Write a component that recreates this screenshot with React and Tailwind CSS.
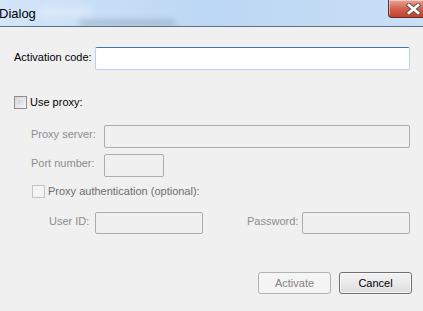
import React from "react"

const font = { fontFamily: '"Liberation Sans", Arial, sans-serif' }

function Checkbox({ disabled }) {
  return (
    <span
      className={
        disabled
          ? "box-border block h-[13px] w-[13px] shrink-0 border border-[#c4c4c4] bg-[#f4f4f4]"
          : "box-border block h-[13px] w-[13px] shrink-0 border border-[#8e8f8f] bg-gradient-to-br from-[#d6d6d6] to-[#f7f7f7] p-[2px]"
      }
    >
      {!disabled && <span className="block h-full w-full border border-[#e8e8e8] bg-gradient-to-br from-[#cbcbcb] to-[#f2f2f2]" />}
    </span>
  )
}

function Field({ w, h = "h-[23px]" }) {
  return <div className={`${w} ${h} box-border rounded-[2px] border border-[#adadad] bg-[#f0f0f0]`} />
}

export default function App() {
  return (
    <div className="h-[311px] w-[423px] overflow-hidden bg-[#f0f0f0] text-[11px] leading-[13px] text-black" style={font}>
      <div className="relative flex h-[27px] overflow-hidden border-b border-[#5d6f82] bg-gradient-to-r from-[#d3e5f8] via-[#bcd7f4] to-[#c9dff6]">
        <div className="pointer-events-none absolute left-[80px] top-[20px] h-[6px] w-[95px] bg-[#6a7f95] opacity-40 blur-[3px]" />
        <div className="pointer-events-none absolute left-[40px] top-[8px] h-[8px] w-[50px] bg-white opacity-40 blur-[4px]" />
        <span className="relative ml-[-1px] mt-[6px] text-[13px] leading-[16px] text-black">Dialog</span>
        <div className="relative ml-auto flex h-[18px] w-[35px] items-center rounded-bl-[4px] border-b border-l border-[#6d2a20] bg-gradient-to-b from-[#e9a698] via-[#d2634f] to-[#c0402c] pl-[17px] shadow-[inset_1px_1px_0_rgba(255,255,255,0.45)]">
          <svg width="15" height="12" viewBox="0 0 15 12">
            <path d="M3 2.2 L12 9.8 M12 2.2 L3 9.8" stroke="#6b4a46" strokeWidth="4.6" strokeLinecap="square" />
            <path d="M3 2.2 L12 9.8 M12 2.2 L3 9.8" stroke="#ffffff" strokeWidth="2.8" strokeLinecap="square" />
          </svg>
        </div>
      </div>

      <div className="flex flex-col pl-[14px]">
        <div className="mt-[20px] flex h-[23px] items-start">
          <span className="w-[81px] pt-[4px]">Activation code:</span>
          <div className="box-border h-[23px] w-[315px] rounded-[2px] border border-[#b7d3ec] border-t-[#3d7bad] bg-white" />
        </div>

        <div className="mt-[26px] flex h-[13px] items-center gap-[3px]">
          <Checkbox />
          <span>Use proxy:</span>
        </div>

        <div className="mt-[16px] flex h-[23px] items-start pl-[17px] text-[#8d8d8d]">
          <span className="w-[73px] pt-[3px]">Proxy server:</span>
          <Field w="w-[306px]" />
        </div>

        <div className="mt-[6px] flex h-[23px] items-start pl-[17px] text-[#8d8d8d]">
          <span className="w-[73px] pt-[3px]">Port number:</span>
          <Field w="w-[60px]" />
        </div>

        <div className="mt-[8px] flex h-[13px] items-center gap-[3px] pl-[18px] text-[#6d6d6d]">
          <Checkbox disabled />
          <span>Proxy authentication (optional):</span>
        </div>

        <div className="mt-[14px] flex h-[22px] items-start pl-[35px] text-[#8d8d8d]">
          <span className="w-[46px] pt-[3px]">User ID:</span>
          <Field w="w-[108px]" h="h-[22px]" />
          <span className="ml-[44px] w-[55px] pt-[3px]">Password:</span>
          <Field w="w-[108px]" h="h-[22px]" />
        </div>

        <div className="mt-[38px] flex justify-end gap-[8px] pr-[11px]">
          <button className="box-border flex h-[22px] w-[73px] items-center justify-center rounded-[3px] border border-[#adb2b5] bg-[#f4f4f4] text-[#838383]">
            Activate
          </button>
          <button className="box-border flex h-[22px] w-[73px] items-center justify-center rounded-[3px] border border-[#707070] bg-gradient-to-b from-[#f2f2f2] via-[#ebebeb] to-[#dcdcdc] text-black shadow-[inset_0_0_0_1px_rgba(255,255,255,0.7)]">
            Cancel
          </button>
        </div>
      </div>
    </div>
  )
}
